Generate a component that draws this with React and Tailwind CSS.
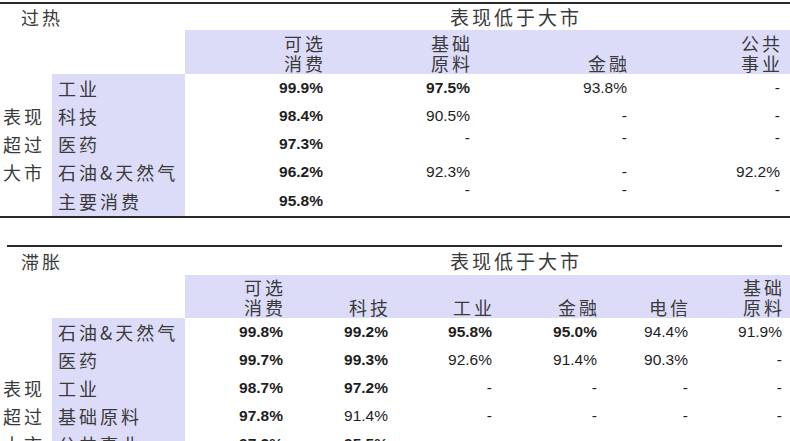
import React from "react";

const CJK = "font-['Noto_Sans_CJK_SC',sans-serif] text-[18px] tracking-[3px] text-[#3a3a3a]";
const NUM = "font-['Liberation_Sans',Arial,sans-serif] text-[15.5px] text-[#1e1e1e]";
const BAND = "bg-[#dcdcf9]";

const Val = ({ v, w, shift = "" }) => {
  const bold = v.startsWith("*");
  const text = bold ? v.slice(1) : v;
  return (
    <div className={`${w} flex items-center justify-end ${NUM} ${bold ? "font-bold" : ""}`}>
      <span className={shift}>{text}</span>
    </div>
  );
};

const Head = ({ lines, w }) => (
  <div className={`${w} flex flex-col items-end justify-end pb-[1px] ${CJK} leading-[20px]`}>
    {lines.map((l) => (
      <span key={l} className="-mr-[3px]">{l}</span>
    ))}
  </div>
);

const topCols = ["w-[138px]", "w-[147px]", "w-[157px]", "w-[153px]"];
const topRows = [
  { side: "", label: "工业", vals: ["*99.9%", "*97.5%", "93.8%", "-"] },
  { side: "表现", label: "科技", vals: ["*98.4%", "90.5%", "-", "-"] },
  { side: "超过", label: "医药", vals: ["*97.3%", "-", "-", "-"], shift: "-translate-y-[6px]" },
  { side: "大市", label: "石油&天然气", vals: ["*96.2%", "92.3%", "-", "92.2%"] },
  { side: "", label: "主要消费", vals: ["*95.8%", "-", "-", "-"], shift: "-translate-y-[11px]" },
];

const botCols = ["w-[98px]", "w-[105px]", "w-[104px]", "w-[105px]", "w-[91px]", "w-[94px]"];
const botRows = [
  { side: "", label: "石油&天然气", vals: ["*99.8%", "*99.2%", "*95.8%", "*95.0%", "94.4%", "91.9%"] },
  { side: "", label: "医药", vals: ["*99.7%", "*99.3%", "92.6%", "91.4%", "90.3%", "-"] },
  { side: "表现", label: "工业", vals: ["*98.7%", "*97.2%", "-", "-", "-", "-"] },
  { side: "超过", label: "基础原料", vals: ["*97.8%", "91.4%", "-", "-", "-", "-"] },
  { side: "大市", label: "公共事业", vals: ["*97.2%", "*95.5%", "-", "-", "-", "-"] },
];

export default function App() {
  return (
    <div className="w-[790px] h-[441px] overflow-hidden bg-white">
      {/* 过热 */}
      <div className="pt-[2px]">
        <div className="border-t-2 border-[#2a2a2a]" />
        <div className="h-[26px] flex items-center">
          <div className={`w-[450px] pl-[21px] ${CJK}`}>过热</div>
          <div className={`${CJK} text-[19px]`}>表现低于大市</div>
        </div>
        <div className="h-[44px] flex">
          <div className="w-[185px]" />
          <div className={`flex-1 flex ${BAND}`}>
            <Head w={topCols[0]} lines={["可选", "消费"]} />
            <Head w={topCols[1]} lines={["基础", "原料"]} />
            <Head w={topCols[2]} lines={["金融"]} />
            <Head w={topCols[3]} lines={["公共", "事业"]} />
          </div>
        </div>
        {topRows.map((r, i) => (
          <div key={r.label} className={`flex ${i === 4 ? "h-[30px]" : "h-[28px]"}`}>
            <div className={`w-[52px] pl-[3px] flex items-center ${CJK}`}>{r.side}</div>
            <div className={`w-[133px] pl-[6px] flex items-center ${BAND} ${CJK}`}>{r.label}</div>
            {r.vals.map((v, j) => (
              <Val key={j} v={v} w={topCols[j]} shift={v === "-" ? r.shift || "" : ""} />
            ))}
          </div>
        ))}
        <div className="border-t-2 border-[#2a2a2a]" />
      </div>

      {/* 滞胀 */}
      <div className="pt-[27px]">
        <div className="ml-[7px] w-[775px] border-t-2 border-[#2a2a2a]" />
        <div className="h-[28px] flex items-center">
          <div className={`w-[450px] pl-[21px] ${CJK}`}>滞胀</div>
          <div className={`${CJK} text-[19px]`}>表现低于大市</div>
        </div>
        <div className="h-[43px] flex">
          <div className="w-[185px]" />
          <div className={`flex-1 flex ${BAND}`}>
            <Head w={botCols[0]} lines={["可选", "消费"]} />
            <Head w={botCols[1]} lines={["科技"]} />
            <Head w={botCols[2]} lines={["工业"]} />
            <Head w={botCols[3]} lines={["金融"]} />
            <Head w={botCols[4]} lines={["电信"]} />
            <Head w={botCols[5]} lines={["基础", "原料"]} />
          </div>
        </div>
        {botRows.map((r) => (
          <div key={r.label} className="flex h-[28px]">
            <div className={`w-[52px] pl-[3px] flex items-center ${CJK}`}>{r.side}</div>
            <div className={`w-[133px] pl-[6px] flex items-center ${BAND} ${CJK}`}>{r.label}</div>
            {r.vals.map((v, j) => (
              <Val key={j} v={v} w={botCols[j]} />
            ))}
          </div>
        ))}
      </div>
    </div>
  );
}
